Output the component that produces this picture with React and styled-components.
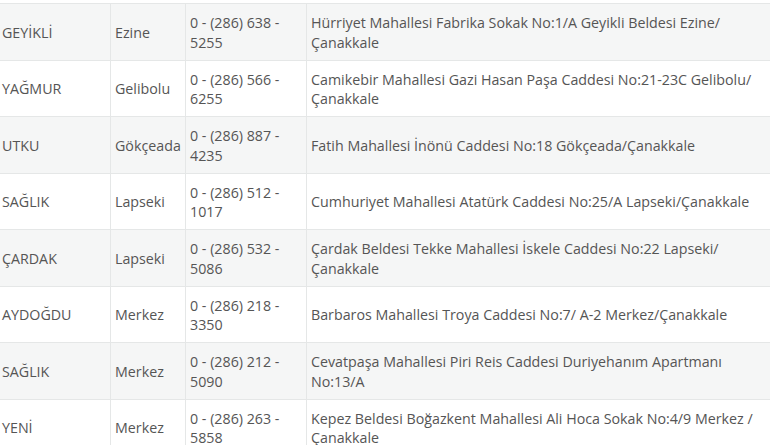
import React from 'react';
import styled, { createGlobalStyle } from 'styled-components';

const GlobalStyle = createGlobalStyle`
  html, body {
    margin: 0;
    padding: 0;
    background: #fff;
    overflow: hidden;
  }
  body {
    font-family: "Open Sans", "Liberation Sans", sans-serif;
  }
`;

const Wrapper = styled.div`
  width: 770px;
  height: 445px;
  overflow: hidden;
  padding-top: 3px;
  box-sizing: border-box;
`;

const Table = styled.table`
  border-collapse: collapse;
  table-layout: fixed;
  width: 774px;
  margin-left: -3px;
  font-size: 14.25px;
  line-height: 19.75px;
  color: #555;
`;

const Col = styled.col`
  width: ${(p) => (p.$w ? `${p.$w}px` : 'auto')};
`;

const Row = styled.tr`
  background: ${(p) => (p.$shaded ? '#f5f6f6' : '#fff')};
`;

const Cell = styled.td`
  border: 1px solid #e5e7e7;
  padding: 9px 4px 7px;
  vertical-align: middle;
  text-align: left;
`;

const rows = [
  ['GEYİKLİ', 'Ezine', '0 - (286) 638 - 5255', 'Hürriyet Mahallesi Fabrika Sokak No:1/A Geyikli Beldesi Ezine/ Çanakkale'],
  ['YAĞMUR', 'Gelibolu', '0 - (286) 566 - 6255', 'Camikebir Mahallesi Gazi Hasan Paşa Caddesi No:21-23C Gelibolu/ Çanakkale'],
  ['UTKU', 'Gökçeada', '0 - (286) 887 - 4235', 'Fatih Mahallesi İnönü Caddesi No:18 Gökçeada/Çanakkale'],
  ['SAĞLIK', 'Lapseki', '0 - (286) 512 - 1017', 'Cumhuriyet Mahallesi Atatürk Caddesi No:25/A Lapseki/Çanakkale'],
  ['ÇARDAK', 'Lapseki', '0 - (286) 532 - 5086', 'Çardak Beldesi Tekke Mahallesi İskele Caddesi No:22 Lapseki/ Çanakkale'],
  ['AYDOĞDU', 'Merkez', '0 - (286) 218 - 3350', 'Barbaros Mahallesi Troya Caddesi No:7/ A-2 Merkez/Çanakkale'],
  ['SAĞLIK', 'Merkez', '0 - (286) 212 - 5090', 'Cevatpaşa Mahallesi Piri Reis Caddesi Duriyehanım Apartmanı No:13/A'],
  ['YENİ', 'Merkez', '0 - (286) 263 - 5858', 'Kepez Beldesi Boğazkent Mahallesi Ali Hoca Sokak No:4/9 Merkez / Çanakkale'],
];

export default function App() {
  return (
    <>
      <GlobalStyle />
      <Wrapper>
        <Table>
          <colgroup>
            <Col $w={113} />
            <Col $w={75} />
            <Col $w={121} />
            <Col />
          </colgroup>
          <tbody>
            {rows.map((r, i) => (
              <Row key={i} $shaded={i % 2 === 0}>
                {r.map((c, j) => (
                  <Cell key={j}>{c}</Cell>
                ))}
              </Row>
            ))}
          </tbody>
        </Table>
      </Wrapper>
    </>
  );
}
